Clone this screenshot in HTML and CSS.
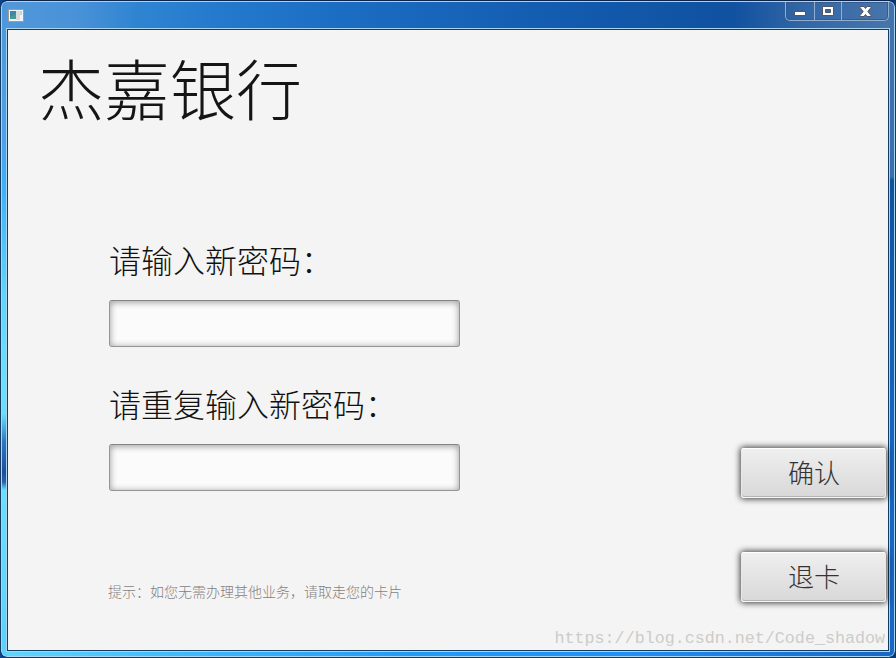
FILE: index.html
```html
<!DOCTYPE html>
<html lang="zh-CN">
<head>
  <meta charset="UTF-8" />
  <title>杰嘉银行</title>
  <link rel="stylesheet" href="styles.css">
</head>
<body>

  <div class="window">
    <div class="frame">
      <div class="titlebar">
        <svg class="app-icon" width="16" height="13" viewBox="0 0 16 13">
          <rect x="0.5" y="0.5" width="15" height="12" fill="#f4f4f2" stroke="#a29b94" />
          <rect x="2" y="2" width="6" height="8" fill="#4a9a91" />
          <path d="M2 2h6v3l-6 3z" fill="#4187a5" />
          <rect x="8" y="2" width="4" height="9" fill="#dcdce0" />
          <rect x="12" y="2" width="2" height="4" fill="#b9dcd8" />
        </svg>
        <div class="controls">
          <span class="control min">
            <svg width="12" height="6"><rect x="0.5" y="0.5" width="11" height="4" fill="#fff" stroke="#535666" /></svg>
          </span>
          <span class="control max">
            <svg width="12" height="10"><path d="M.5.5h11v9H.5zM3.5 3.5v3h5v-3z" fill="#fff" fill-rule="evenodd" stroke="#535666" /></svg>
          </span>
          <span class="control close">
            <svg width="13" height="11"><path d="M1 .5h4l1.500 2L8 .5h4v1L8.800 5.500 12 9.500v1H8l-1.500-2-1.500 2H1v-1L4.200 5.500 1 1.500z" fill="#fff" stroke="#535666" /></svg>
          </span>
        </div>
      </div>

      <div class="client">
        <h1>杰嘉银行</h1>
        <div class="content">
          <form class="fields">
            <label for="pass1">请输入新密码：</label>
            <input type="password" id="pass1" />
            <label for="pass2">请重复输入新密码：</label>
            <input type="password" id="pass2" />
            <p class="hint">提示：如您无需办理其他业务，请取走您的卡片</p>
          </form>
          <div class="actions">
            <button type="button">确认</button>
            <button type="button">退卡</button>
          </div>
        </div>
        <div class="watermark">https://blog.csdn.net/Code_shadow</div>
      </div>
    </div>
  </div>

</body>
</html>
```
FILE: styles.css
```css
* {
  box-sizing: border-box;
}
body {
  margin: 0;
  background: linear-gradient(90deg, #0a4590, #06387c);
  font-family: "Liberation Serif", "Noto Sans CJK SC", serif;
  overflow: hidden;
}
.window {
  width: 896px;
  height: 658px;
  border: 1px solid #143b60;
  border-top-color: #0b2447;
  border-radius: 7px;
  overflow: hidden;
}
.frame {
  height: 656px;
  padding: 0 4px 4px;
  border: 1px solid #a9d4ef;
  border-radius: 6px;
  background:
    linear-gradient(#4f95d8 0, #4ba3ed 150px, #3eb0fa 185px, #5bd5fb 290px, #6ae1fb 380px, #67defb 412px, #2d76c5 440px, #1d4da0 470px, #2860af 480px, #66e0fb 488px, #5bd0fb 656px) left / 5px 100% no-repeat,
    linear-gradient(#4472ab 0, #3a6eaf 175px, #10519c 178px, #1563bd 400px, #1767c4 656px) right / 5px 100% no-repeat,
    linear-gradient(90deg, #61d7fc 0, #45bdfb 150px, #249bf7 400px, #218ff3 630px, #1767c4 890px) bottom / 100% 5px no-repeat,
    linear-gradient(90deg, #5298da 0, #4992d8 75px, #2f84d2 135px, #2479cd 220px, #1b6dc3 340px, #125aad 580px, #1051a0 730px, #3266a5 800px, #4876ac 892px);
}
.titlebar {
  display: flex;
  justify-content: space-between;
  height: 26px;
}
.app-icon {
  margin: 7px 0 0 2px;
}
.controls {
  display: flex;
  width: 104px;
  height: 19px;
  margin-right: 1px;
  border: 1px solid #91add0;
  border-top: 0;
  border-radius: 0 0 5px 5px;
  box-shadow: inset 0 0 0 1px #315b91;
}
.control {
  display: flex;
  justify-content: center;
  align-items: center;
  border-right: 1px solid #91add0;
}
.control svg {
  display: block;
}
.min {
  width: 29px;
  padding-top: 5px;
}
.max {
  width: 27px;
}
.close {
  flex: 1;
  border-right: 0;
}
.client {
  display: flex;
  flex-direction: column;
  width: 882px;
  height: 622px;
  margin: 1px 0 0 1px;
  border: 1px solid #153c61;
  background: #f4f4f4;
  box-shadow: 0 0 0 1px #a9d4ef;
}
h1 {
  margin: 14px 0 0 30px;
  font-size: 66px;
  line-height: 98px;
  font-weight: 300;
  color: #151515;
}
.content {
  display: flex;
  justify-content: space-between;
  margin-top: 97px;
  padding: 0 2px 0 101px;
}
.fields {
  display: flex;
  flex-direction: column;
  width: 352px;
}
label {
  height: 61px;
  font-size: 32px;
  line-height: 46px;
  font-weight: 300;
  white-space: nowrap;
  color: #111;
}
input {
  width: 351px;
  height: 47px;
  margin-bottom: 36px;
  padding: 0 10px;
  border: 1px solid #959595;
  border-top-color: #858585;
  border-radius: 3px;
  background: #fbfbfb;
  box-shadow: inset 0 1px 7px rgba(0, 0, 0, .4);
  outline: 0;
}
.hint {
  margin: 56px 0 0 -1px;
  font-size: 14px;
  line-height: 20px;
  font-weight: 300;
  color: #857e7e;
  white-space: nowrap;
}
.actions {
  display: flex;
  flex-direction: column;
  gap: 54px;
  padding-top: 209px;
}
button {
  width: 145px;
  height: 50px;
  padding: 0 0 4px 1px;
  border: 1px solid #fff;
  border-color: #fff #e8e8e8 #f5f5f5;
  border-radius: 3px;
  background: linear-gradient(#efefef, #d8d8d8);
  box-shadow: inset 0 -1px #b5b5b5, 0 0 6px 1px rgba(0, 0, 0, .75);
  font-family: inherit;
  font-size: 26px;
  font-weight: 300;
  color: #333;
}
.watermark {
  margin: auto 3px -1px auto;
  font: 16.7px/24px "Liberation Mono", monospace;
  color: #ccccca;
}
```
